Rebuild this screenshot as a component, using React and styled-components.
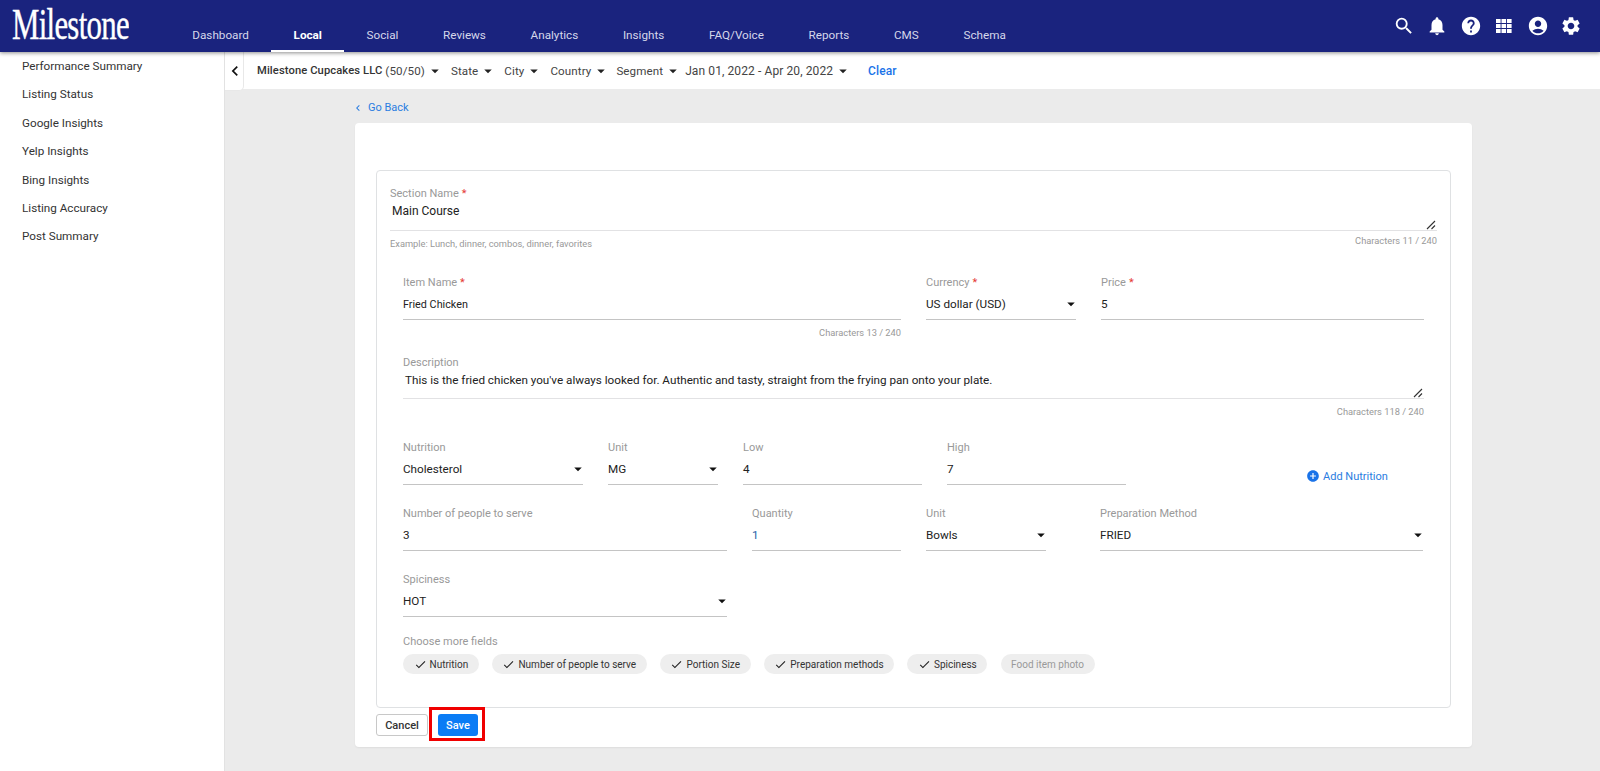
import React from 'react';
import styled, { createGlobalStyle } from 'styled-components';
import {
  MdSearch, MdNotifications, MdHelp, MdAccountCircle, MdSettings,
  MdArrowDropDown, MdChevronLeft, MdCheck, MdAddCircle,
} from 'react-icons/md';

const GlobalStyle = createGlobalStyle`
  html, body { margin: 0; padding: 0; height: 100%; overflow: hidden; }
  body { font-family: Roboto, "Liberation Sans", sans-serif; background: #ebebeb; color: #333; }
  * { box-sizing: border-box; }
`;

// top navigation
const TopBar = styled.header`
  position: relative;
  z-index: 3;
  height: 52px;
  display: flex;
  align-items: stretch;
  background: #1a237e;
  box-shadow: 0 1px 4px rgba(0, 0, 0, 0.45);
`;

const LogoBox = styled.div`
  width: 170px;
  flex: none;
  padding: 3px 0 0 12px;
  overflow: hidden;
`;

const LogoText = styled.span`
  display: inline-block;
  font-family: "Liberation Serif", serif;
  font-size: 44px;
  line-height: 44px;
  letter-spacing: -1px;
  color: #fff;
  -webkit-text-stroke: 0.4px #fff;
  transform: scaleX(0.7);
  transform-origin: left center;
`;

const NavList = styled.nav`
  display: flex;
  flex: 1;
`;

const NavItem = styled.a`
  display: flex;
  align-items: center;
  padding: 20px 22.35px 0;
  font-size: 11.7px;
  color: ${({ $active }) => ($active ? '#fff' : '#d5d7ea')};
  font-weight: ${({ $active }) => ($active ? 700 : 400)};
  border-bottom: 2px solid ${({ $active }) => ($active ? '#fff' : 'transparent')};
`;

const IconTray = styled.div`
  display: flex;
  align-items: center;
  gap: 11.4px;
  padding: 0 18px 0 0;
  color: #fff;
  svg { display: block; width: 22px; height: 22px; }
`;

// page body
const Body = styled.div`
  display: flex;
  height: 719px;
`;

const Sidebar = styled.aside`
  width: 225px;
  flex: none;
  background: #fff;
  border-right: 1px solid #e2e2e2;
  padding: 1px 0 0 22px;
  margin: 0;
`;

const SideLink = styled.div`
  height: 28.4px;
  line-height: 26px;
  font-size: 11.7px;
  color: #333;
`;

const Main = styled.main`
  flex: 1;
  min-width: 0;
`;

const FilterBar = styled.div`
  height: 37px;
  display: flex;
  align-items: center;
  background: #fff;
  color: #444;
  letter-spacing: 0.1px;
`;

const CollapseTab = styled.div`
  width: 19px;
  height: 39px;
  margin: 0 13px 0 0;
  align-self: flex-start;
  display: flex;
  align-items: center;
  justify-content: center;
  background: #fff;
  border-right: 1px solid #e8e8e8;
  border-bottom: 1px solid #e8e8e8;
  border-radius: 0 0 5px 0;
  color: #111;
  svg { width: 20px; height: 20px; flex: none; margin-left: 2px; }
`;

const Filter = styled.div`
  display: flex;
  align-items: center;
  margin-right: ${({ $gap }) => $gap}px;
  white-space: nowrap;
  font-size: ${({ $size }) => $size || 11.6}px;
  b { font-weight: 500; font-size: 11.2px; color: #333; margin-right: 3px; }
  svg { width: 18px; height: 18px; margin-left: 1px; color: #222; flex: none; }
`;

const ClearLink = styled.a`
  margin-left: 9px;
  font-size: 12px;
  font-weight: 500;
  color: #1a73e8;
`;

const Content = styled.div`
  padding: 0 128px 0 130px;
`;

const BackRow = styled.div`
  height: 34px;
  display: flex;
  align-items: center;
  gap: 3px;
  padding-top: 3px;
  font-size: 11px;
  color: #2a7de1;
  svg { width: 12px; height: 12px; margin-left: -3px; margin-right: 1px; }
`;

const Card = styled.section`
  background: #fff;
  border-radius: 4px;
  padding: 47px 21px 11px;
  box-shadow: 0 1px 2px rgba(0, 0, 0, 0.06);
`;

const FormBox = styled.div`
  height: 538px;
  border: 1px solid #dfe1e3;
  border-radius: 4px;
  padding: 15px 13px 0;
`;

const Label = styled.div`
  height: 14px;
  line-height: 16px;
  font-size: 11px;
  color: #999;
  white-space: nowrap;
  i { font-style: normal; color: #e53935; margin-left: 3px; }
`;

const Control = styled.div`
  position: relative;
  height: ${({ $h }) => $h || 31}px;
  display: flex;
  align-items: ${({ $top }) => ($top ? 'flex-start' : 'center')};
  justify-content: space-between;
  padding: ${({ $top }) => ($top ? '4px 2px 0' : '0')};
  border-bottom: 1px solid ${({ $light }) => ($light ? '#e2e2e4' : '#c4c4c4')};
  font-size: ${({ $size }) => $size || 11.7}px;
  color: ${({ $blue }) => ($blue ? '#1f5fa8' : '#222')};
  svg { width: 18px; height: 18px; margin-right: -4px; color: #111; }
`;

const Grip = styled.svg`
  position: absolute;
  right: 1px;
  bottom: 0;
  && { width: 10px; height: 10px; margin: 0; color: #333; }
`;

const Field = styled.div`
  width: ${({ $w }) => $w}px;
  flex: none;
  margin-left: ${({ $ml }) => $ml || 0}px;
`;

const Row = styled.div`
  display: flex;
  align-items: flex-start;
  gap: ${({ $gap }) => $gap || 25}px;
  margin: ${({ $mt }) => $mt || 0}px 13px 0;
`;

const Notes = styled.div`
  display: flex;
  justify-content: ${({ $split }) => ($split ? 'space-between' : 'flex-end')};
  padding-top: 6px;
  height: 20px;
  line-height: 13px;
  font-size: 9.3px;
  color: #999;
`;

const RaisedNote = styled.span`
  margin-top: -3px;
`;

const AddLink = styled.a`
  display: flex;
  align-items: center;
  gap: 3px;
  margin: 29px 0 0 155px;
  font-size: 11px;
  color: #2a7de1;
  white-space: nowrap;
  svg { width: 14px; height: 14px; color: #1a73e8; }
`;

const ChipRow = styled.div`
  display: flex;
  gap: 13.3px;
  margin: 6px 13px 0;
`;

const Chip = styled.div`
  height: 20px;
  display: flex;
  align-items: center;
  gap: 3px;
  padding: 0 10.5px;
  border-radius: 10px;
  background: #eee;
  font-size: 10px;
  color: ${({ $off }) => ($off ? '#999' : '#333')};
  white-space: nowrap;
  svg { width: 13px; height: 13px; color: #222; }
`;

const Footer = styled.div`
  display: flex;
  gap: 10px;
  margin-top: 6px;
`;

const CancelButton = styled.button`
  width: 52px;
  height: 22px;
  padding: 0;
  background: #fff;
  border: 1px solid #c8c8c8;
  border-radius: 3px;
  font: 500 11px Roboto, sans-serif;
  color: #333;
`;

const SaveButton = styled.button`
  position: relative;
  width: 40px;
  height: 22px;
  padding: 0;
  background: #0a7cf5;
  border: 0;
  border-radius: 3px;
  font: 500 11px Roboto, sans-serif;
  color: #fff;
  &::after {
    content: "";
    position: absolute;
    top: -7px;
    bottom: -5px;
    left: -9px;
    right: -7px;
    border: 3px solid #f00000;
  }
`;

const navItems = ['Dashboard', 'Local', 'Social', 'Reviews', 'Analytics', 'Insights', 'FAQ/Voice', 'Reports', 'CMS', 'Schema'];
const sideItems = ['Performance Summary', 'Listing Status', 'Google Insights', 'Yelp Insights', 'Bing Insights', 'Listing Accuracy', 'Post Summary'];
const chips = ['Nutrition', 'Number of people to serve', 'Portion Size', 'Preparation methods', 'Spiciness'];

const GridIcon = () => (
  <svg viewBox="0 0 22 22" fill="currentColor">
    {[4, 9, 14].map((y) => [3, 8.5, 14].map((x) => (
      <rect key={`${x}-${y}`} x={x} y={y} width="4.6" height="4" />
    )))}
  </svg>
);

const ResizeGrip = () => (
  <Grip viewBox="0 0 10 10" fill="none" stroke="currentColor" strokeWidth="1.1">
    <path d="M1 9 L9 1 M5.5 9 L9 5.5" />
  </Grip>
);

const TextField = ({ w, label, req, value, blue, size }) => (
  <Field $w={w}>
    <Label>{label}{req && <i>*</i>}</Label>
    <Control $blue={blue} $size={size}>{value}</Control>
  </Field>
);

const SelectField = ({ w, ml, label, req, value }) => (
  <Field $w={w} $ml={ml}>
    <Label>{label}{req && <i>*</i>}</Label>
    <Control>{value}<MdArrowDropDown /></Control>
  </Field>
);

const App = () => (
  <>
    <GlobalStyle />
    <TopBar>
      <LogoBox><LogoText>Milestone</LogoText></LogoBox>
      <NavList>
        {navItems.map((item) => (
          <NavItem key={item} $active={item === 'Local'}>{item}</NavItem>
        ))}
      </NavList>
      <IconTray>
        <MdSearch />
        <MdNotifications />
        <MdHelp />
        <GridIcon />
        <MdAccountCircle />
        <MdSettings />
      </IconTray>
    </TopBar>
    <Body>
      <Sidebar>
        {sideItems.map((item) => <SideLink key={item}>{item}</SideLink>)}
      </Sidebar>
      <Main>
        <FilterBar>
          <CollapseTab><MdChevronLeft /></CollapseTab>
          <Filter $gap={7}><b>Milestone Cupcakes LLC</b> (50/50)<MdArrowDropDown /></Filter>
          <Filter $gap={7}>State<MdArrowDropDown /></Filter>
          <Filter $gap={7}>City<MdArrowDropDown /></Filter>
          <Filter $gap={6}>Country<MdArrowDropDown /></Filter>
          <Filter $gap={3}>Segment<MdArrowDropDown /></Filter>
          <Filter $gap={7} $size={12}>Jan 01, 2022 - Apr 20, 2022<MdArrowDropDown /></Filter>
          <ClearLink>Clear</ClearLink>
        </FilterBar>
        <Content>
          <BackRow><MdChevronLeft />Go Back</BackRow>
          <Card>
            <FormBox>
              <Label>Section Name<i>*</i></Label>
              <Control $h={31} $top $light $size={12}>Main Course<ResizeGrip /></Control>
              <Notes $split>
                <span>Example: Lunch, dinner, combos, dinner, favorites</span>
                <RaisedNote>Characters 11 / 240</RaisedNote>
              </Notes>

              <Row $mt={24}>
                <TextField w={498} label="Item Name" req value="Fried Chicken" size={10.8} />
                <SelectField w={150} label="Currency" req value="US dollar (USD)" />
                <TextField w={323} label="Price" req value="5" />
              </Row>
              <Row>
                <Field $w={498}><Notes>Characters 13 / 240</Notes></Field>
              </Row>

              <Row $mt={15}>
                <Field $w={1021}>
                  <Label>Description</Label>
                  <Control $h={30} $top $light>
                    This is the fried chicken you've always looked for. Authentic and tasty, straight from the frying pan onto your plate.
                    <ResizeGrip />
                  </Control>
                  <Notes>Characters 118 / 240</Notes>
                </Field>
              </Row>

              <Row $mt={21}>
                <SelectField w={180} label="Nutrition" value="Cholesterol" />
                <SelectField w={110} label="Unit" value="MG" />
                <TextField w={179} label="Low" value="4" />
                <TextField w={179} label="High" value="7" />
                <AddLink><MdAddCircle />Add Nutrition</AddLink>
              </Row>

              <Row $mt={21}>
                <TextField w={324} label="Number of people to serve" value="3" />
                <TextField w={149} label="Quantity" value="1" blue />
                <SelectField w={120} label="Unit" value="Bowls" />
                <SelectField w={323} ml={29} label="Preparation Method" value="FRIED" />
              </Row>

              <Row $mt={21}>
                <SelectField w={324} label="Spiciness" value="HOT" />
              </Row>

              <Row $mt={17}>
                <Label>Choose more fields</Label>
              </Row>
              <ChipRow>
                {chips.map((chip) => <Chip key={chip}><MdCheck />{chip}</Chip>)}
                <Chip $off>Food item photo</Chip>
              </ChipRow>
            </FormBox>
            <Footer>
              <CancelButton>Cancel</CancelButton>
              <SaveButton>Save</SaveButton>
            </Footer>
          </Card>
        </Content>
      </Main>
    </Body>
  </>
);

export default App;
